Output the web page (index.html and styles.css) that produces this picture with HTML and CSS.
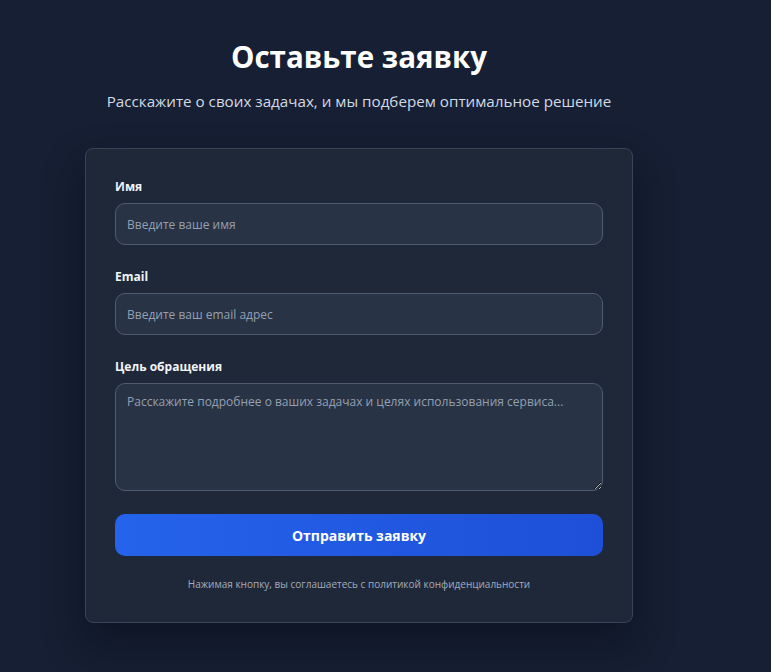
FILE: index.html
```html
<!DOCTYPE html>
<html lang="ru">
<head>
    <meta charset="UTF-8">
    <meta name="viewport" content="width=device-width, initial-scale=1.0">
    <title>Оставьте заявку</title>
    <link rel="stylesheet" href="styles.css">
</head>
<body>
    <section class="request">
        <h1 class="request-title">Оставьте заявку</h1>
        <p class="request-subtitle">Расскажите о своих задачах, и мы подберем оптимальное решение</p>

        <!-- Форма заявки -->
        <form class="request-card">
            <div class="field">
                <label class="field-label" for="name">Имя</label>
                <input id="name" class="field-input" type="text" placeholder="Введите ваше имя">
            </div>
            <div class="field">
                <label class="field-label" for="email">Email</label>
                <input id="email" class="field-input" type="email" placeholder="Введите ваш email адрес">
            </div>
            <div class="field">
                <label class="field-label" for="goal">Цель обращения</label>
                <textarea id="goal" class="field-input field-textarea" placeholder="Расскажите подробнее о ваших задачах и целях использования сервиса..."></textarea>
            </div>
            <button class="submit-btn" type="button">Отправить заявку</button>
            <p class="note">Нажимая кнопку, вы соглашаетесь с политикой конфиденциальности</p>
        </form>
    </section>
</body>
</html>
```

FILE: styles.css
```css
* {
    box-sizing: border-box;
}
body {
    margin: 0;
    min-height: 672px;
    font-family: "Open Sans", "Noto Sans", sans-serif;
    background: #161f33;
    color: #fff;
}
.request {
    width: 548px;
    margin: 0 0 0 85px;
    padding-top: 35px;
    text-align: center;
}
.request-title {
    margin: 0;
    font-size: 29.5px;
    line-height: 44px;
    font-weight: 700;
}
.request-subtitle {
    margin: 11px 0 0;
    font-size: 15.2px;
    line-height: 22px;
    color: #d3dae4;
}
.request-card {
    margin-top: 36px;
    padding: 28px 29px 30px;
    background: #1f2839;
    border: 1px solid #3a4456;
    border-radius: 8px;
    box-shadow: 0 20px 40px rgba(5, 9, 20, 0.45);
    text-align: left;
}
.field {
    margin-bottom: 22px;
}
.field-label {
    display: block;
    margin-bottom: 6px;
    font-size: 12px;
    line-height: 20px;
    font-weight: 700;
    color: #f1f5f9;
}
.field-input {
    display: block;
    width: 100%;
    height: 42px;
    padding: 0 11px;
    font-family: inherit;
    font-size: 12px;
    color: #e2e8f0;
    background: #283345;
    border: 1px solid #4f5b6e;
    border-radius: 10px;
    outline: none;
}
.field-input::placeholder {
    color: #94a0b2;
}
.field-textarea {
    height: 108px;
    padding: 9px 11px;
    resize: vertical;
}
.submit-btn {
    display: block;
    width: 100%;
    height: 42px;
    margin-top: 23px;
    font-family: inherit;
    font-size: 14px;
    font-weight: 700;
    color: #fff;
    background: linear-gradient(90deg, #2563eb, #1e4fd8);
    border: none;
    border-radius: 10px;
    cursor: pointer;
}
.note {
    margin: 20px 0 0;
    text-align: center;
    font-size: 10px;
    line-height: 16px;
    color: #a3adbb;
}
```
